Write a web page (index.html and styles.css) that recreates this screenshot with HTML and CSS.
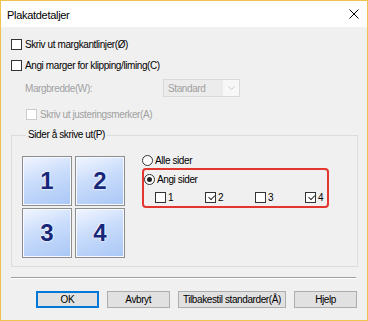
FILE: index.html
```html
<!DOCTYPE html>
<html lang="nb">
<head>
    <meta charset="UTF-8">
    <title>Plakatdetaljer</title>
    <link rel="stylesheet" href="styles.css">
</head>
<body>
    <div class="window">
        <div class="titlebar">
            <span class="title">Plakatdetaljer</span>
            <svg class="close" width="10" height="10" viewBox="0 0 10 10">
                <path d="M0.5 0.5 L9.5 9.5 M9.5 0.5 L0.5 9.5" stroke="#000" stroke-width="1" fill="none"/>
            </svg>
        </div>
        <div class="content">
            <label class="row">
                <span class="cb"></span>
                <span>Skriv ut margkantlinjer(Ø)</span>
            </label>
            <label class="row">
                <span class="cb"></span>
                <span>Angi marger for klipping/liming(C)</span>
            </label>
            <div class="row margin-row disabled">
                <span class="margin-label">Margbredde(W):</span>
                <div class="select">
                    <span class="select-text">Standard</span>
                    <span class="select-arrow">
                        <svg width="7" height="4" viewBox="0 0 7 4">
                            <path d="M0.5 0.5 L3.5 3.5 L6.5 0.5" stroke="#c8c8c8" fill="none"/>
                        </svg>
                    </span>
                </div>
            </div>
            <label class="row sub-row disabled">
                <span class="cb"></span>
                <span>Skriv ut justeringsmerker(A)</span>
            </label>

            <fieldset class="group">
                <legend>Sider å skrive ut(P)</legend>
                <div class="group-body">
                    <div class="tiles">
                        <div class="tile">1</div>
                        <div class="tile">2</div>
                        <div class="tile">3</div>
                        <div class="tile">4</div>
                    </div>
                    <div class="choices">
                        <label class="radio-row">
                            <span class="radio"></span>
                            <span>Alle sider</span>
                        </label>
                        <div class="highlight">
                            <label class="radio-row">
                                <span class="radio checked"></span>
                                <span>Angi sider</span>
                            </label>
                            <div class="pages">
                                <label class="page"><span class="cb"></span>1</label>
                                <label class="page"><span class="cb checked"></span>2</label>
                                <label class="page"><span class="cb"></span>3</label>
                                <label class="page"><span class="cb checked"></span>4</label>
                            </div>
                        </div>
                    </div>
                </div>
            </fieldset>

            <div class="separator"></div>

            <div class="buttons">
                <button class="btn default">OK</button>
                <button class="btn">Avbryt</button>
                <button class="btn wide">Tilbakestil standarder(Å)</button>
                <button class="btn">Hjelp</button>
            </div>
        </div>
    </div>
</body>
</html>
```

FILE: styles.css
```css
body {
    margin: 0;
    font-family: "Liberation Sans", Arial, sans-serif;
    font-size: 10px;
    letter-spacing: -0.4px;
    color: #000;
}
.window {
    width: 368px;
    height: 321px;
    box-sizing: border-box;
    border: 1px solid #f0c24a;
    background: #f0f0f0;
    display: flex;
    flex-direction: column;
}
.titlebar {
    height: 26px;
    background: #fff;
    display: flex;
    align-items: center;
    justify-content: space-between;
    padding: 0 8px 0 6px;
}
.title {
    font-size: 11px;
    letter-spacing: -0.3px;
    padding-top: 1px;
}
.close {
    margin-top: -1px;
}
.content {
    flex: 1;
    padding: 7px 10px 0 10px;
}
.row {
    display: flex;
    align-items: center;
    height: 20px;
    gap: 3px;
    margin-bottom: 1px;
}
.cb {
    width: 11px;
    height: 11px;
    box-sizing: border-box;
    border: 1px solid #333;
    background: #fff;
    position: relative;
    flex: none;
}
.cb.checked::after {
    content: "";
    position: absolute;
    left: 2px;
    top: 1px;
    width: 5px;
    height: 3px;
    border-left: 1px solid #333;
    border-bottom: 1px solid #333;
    transform: rotate(-45deg) translate(0, 1px);
}
.disabled {
    color: #a0a0a0;
}
.disabled .cb {
    border-color: #cccccc;
}
.margin-row {
    height: 18px;
    margin-top: 4px;
    margin-bottom: 7px;
}
.margin-label {
    margin-left: 14px;
    width: 135px;
}
.select {
    width: 77px;
    height: 18px;
    box-sizing: border-box;
    border: 1px solid #d9d9d9;
    background: #ececec;
    display: flex;
    align-items: center;
}
.select-text {
    flex: 1;
    padding-left: 4px;
}
.select-arrow {
    width: 16px;
    height: 16px;
    background: #f7f7f7;
    display: flex;
    align-items: center;
    justify-content: center;
}
.sub-row {
    margin-left: 15px;
}
.group {
    margin: 4px 0 0 0;
    width: 347px;
    box-sizing: border-box;
    border: 1px solid #dcdcdc;
    padding: 14px 10px 8px 10px;
}
.group legend {
    padding: 0 2px;
    margin-left: 4px;
    line-height: 14px;
}
.group-body {
    display: flex;
    gap: 17px;
}
.tiles {
    display: grid;
    grid-template-columns: 50px 50px;
    grid-template-rows: 50px 50px;
    gap: 2px 3px;
}
.tile {
    box-sizing: border-box;
    border: 1px solid #8e8e8e;
    box-shadow: inset 0 0 0 1px #f4f8ff;
    background: linear-gradient(160deg, #f2f6ff 0%, #c9dcfb 45%, #a9c7f6 100%);
    display: flex;
    align-items: center;
    justify-content: center;
    font-weight: bold;
    font-size: 24px;
    letter-spacing: 0;
    color: #17287a;
    text-shadow: 0 0 2px #fff, 0 0 2px #fff;
}
.choices {
    display: flex;
    flex-direction: column;
    margin-top: -3px;
}
.radio-row {
    display: flex;
    align-items: center;
    gap: 2px;
    height: 14px;
}
.radio {
    width: 11px;
    height: 11px;
    box-sizing: border-box;
    border: 1px solid #333;
    border-radius: 50%;
    background: #fff;
    display: flex;
    align-items: center;
    justify-content: center;
}
.radio.checked::after {
    content: "";
    width: 5px;
    height: 5px;
    border-radius: 50%;
    background: #222;
}
.highlight {
    margin-top: 1px;
    width: 187px;
    height: 40px;
    box-sizing: border-box;
    border: 2px solid #e2362e;
    border-radius: 4px;
    padding: 2px 0 0 0;
}
.pages {
    display: grid;
    grid-template-columns: 50px 50px 50px 50px;
    padding-left: 11px;
    margin-top: 5px;
}
.page {
    display: flex;
    align-items: center;
    gap: 2px;
    height: 13px;
}
.separator {
    margin-top: 10px;
    width: 345px;
    border-top: 1px solid #a0a0a0;
    border-bottom: 1px solid #fff;
}
.buttons {
    display: flex;
    margin-top: 12px;
    margin-left: 25px;
    gap: 8px;
}
.btn {
    width: 63px;
    height: 17px;
    padding: 0;
    font-family: inherit;
    font-size: 10px;
    letter-spacing: -0.4px;
    white-space: nowrap;
    background: #e1e1e1;
    border: 1px solid #adadad;
    color: #000;
}
.btn.default {
    border: 1px solid #0078d7;
    box-shadow: inset 0 0 0 1px #0078d7;
}
.btn.wide {
    width: 109px;
}
```
